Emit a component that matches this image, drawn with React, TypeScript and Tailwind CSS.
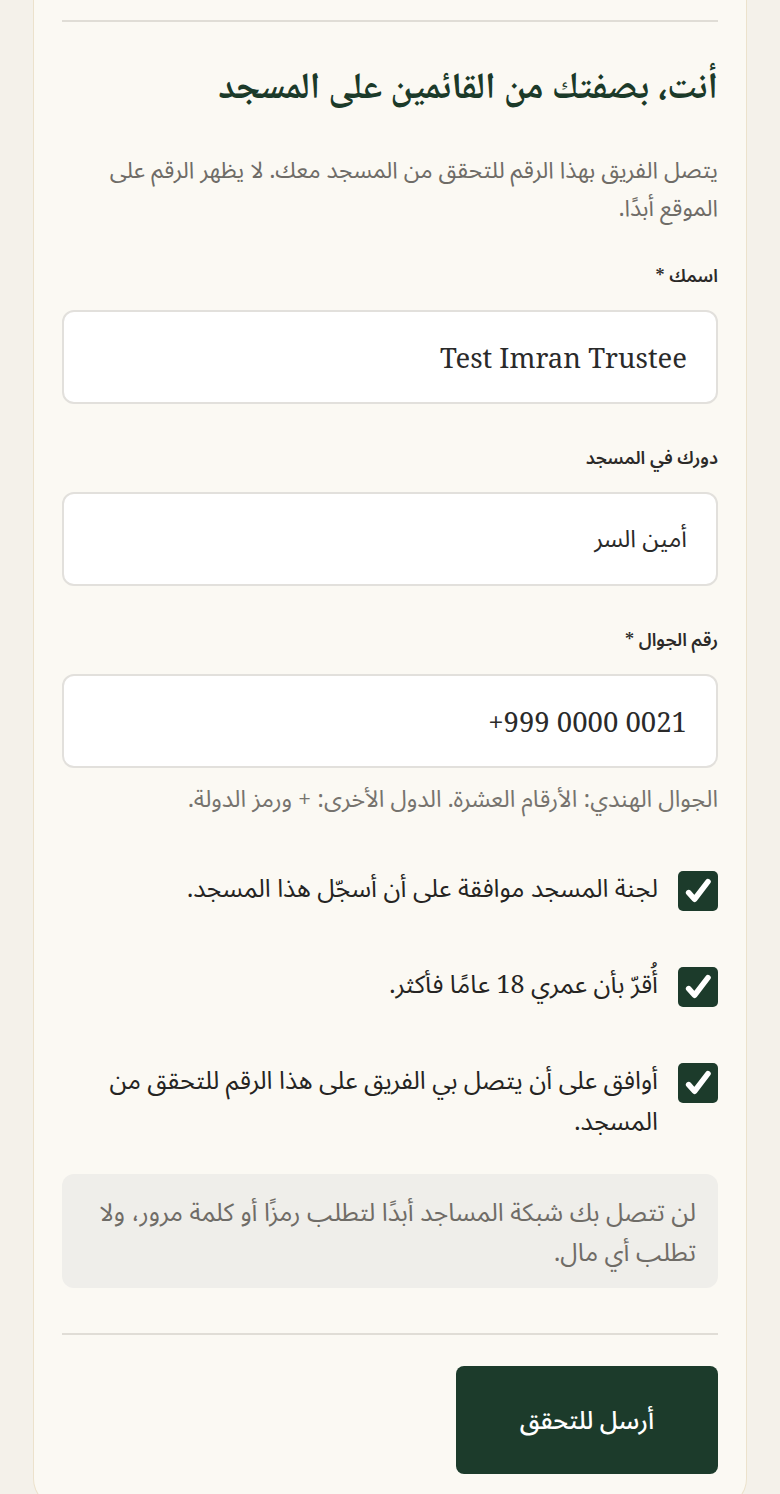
import React, { useState } from 'react';

const bodyFont = "font-['Noto_Serif','Noto_Sans_Arabic','DejaVu_Sans',sans-serif]";

const Check: React.FC<{ checked: boolean; onClick: () => void }> = ({ checked, onClick }) => (
  <button
    type="button"
    onClick={onClick}
    className={`w-10 h-10 shrink-0 rounded-[5px] flex items-center justify-center ${checked ? 'bg-[#1c3b2b]' : 'bg-white border-2 border-[#cfcbc3]'}`}
  >
    {checked && (
      <svg viewBox="0 0 24 24" className="w-[32px] h-[32px]" fill="none" stroke="white" strokeWidth="4.2" strokeLinecap="round" strokeLinejoin="round">
        <path d="M5 13.2l4.4 5L19.5 5" />
      </svg>
    )}
  </button>
);

const Field: React.FC<{ label: string; value: string; required?: boolean; latin?: boolean; ltr?: boolean }> = ({
  label,
  value,
  required,
  latin,
  ltr,
}) => (
  <div className="flex flex-col">
    <label className="text-[18px] leading-[28px] font-semibold text-[#2b2a28]">
      {label}
      {required && ' *'}
    </label>
    <input
      defaultValue={value}
      dir={ltr ? 'ltr' : undefined}
      className={`mt-[21px] h-[94px] w-full rounded-xl border-2 border-[#e2e0dc] bg-white px-[29px] text-right text-[#2a2a2a] outline-none ${latin ? 'text-[27.5px]' : 'text-[24px]'} ${bodyFont}`}
    />
  </div>
);

export default function App() {
  const [checks, setChecks] = useState([true, true, true]);
  const toggle = (i: number) => setChecks((c) => c.map((v, j) => (j === i ? !v : v)));

  const agreements = [
    'لجنة المسجد موافقة على أن أسجّل هذا المسجد.',
    'أُقرّ بأن عمري 18 عامًا فأكثر.',
    'أوافق على أن يتصل بي الفريق على هذا الرقم للتحقق من المسجد.',
  ];

  return (
    <div dir="rtl" className={`min-h-screen bg-[#f4f1ea] px-[33px] ${bodyFont}`}>
      <div className="bg-[#fbf9f3] border-x border-b border-[#ece2cc] rounded-b-[28px] px-[28px] pt-[20px] pb-[32px]">
        <div className="h-[2px] bg-[#e0ddd6]" />

        <h2 className="mt-[42px] text-[37px] leading-[52px] font-bold text-[#1b3a29] font-['Noto_Naskh_Arabic','Noto_Naskh_Arabic_UI','Amiri','Scheherazade_New','Noto_Serif_Arabic','Noto_Sans_Arabic',serif]">
          أنت، بصفتك من القائمين على المسجد
        </h2>

        <p className="mt-[34px] text-[23px] leading-[38px] text-[#6f6c67]">
          يتصل الفريق بهذا الرقم للتحقق من المسجد معك. لا يظهر الرقم على الموقع أبدًا.
        </p>

        <div className="mt-[35px] flex flex-col gap-[39px]">
          <Field label="اسمك" value="Test Imran Trustee" required latin />
          <Field label="دورك في المسجد" value="أمين السر" />
          <Field label="رقم الجوال" value="+999 0000 0021" required latin ltr />
        </div>

        <p className="mt-[13px] text-[23.5px] leading-[34px] text-[#76736e]">
          الجوال الهندي: الأرقام العشرة. الدول الأخرى: + ورمز الدولة.
        </p>

        <div className="mt-[56px] flex flex-col gap-[56px]">
          {agreements.map((t, i) => (
            <div key={i} className="flex items-start gap-5">
              <Check checked={checks[i]} onClick={() => toggle(i)} />
              <span className="text-[25px] leading-[41px] text-[#252422] -mt-[4px]">{t}</span>
            </div>
          ))}
        </div>

        <div className="mt-[33px] rounded-xl bg-[#efeeea] px-[22px] py-[17px] text-[25px] leading-[40px] text-[#6f6c67]">
          لن تتصل بك شبكة المساجد أبدًا لتطلب رمزًا أو كلمة مرور، ولا تطلب أي مال.
        </div>

        <div className="mt-[45px] h-[2px] bg-[#e0ddd6]" />

        <div className="mt-[31px] flex">
          <button className="w-[262px] h-[108px] rounded-lg bg-[#1c3b2b] text-white text-[25px] font-medium">
            أرسل للتحقق
          </button>
        </div>
      </div>
    </div>
  );
}
